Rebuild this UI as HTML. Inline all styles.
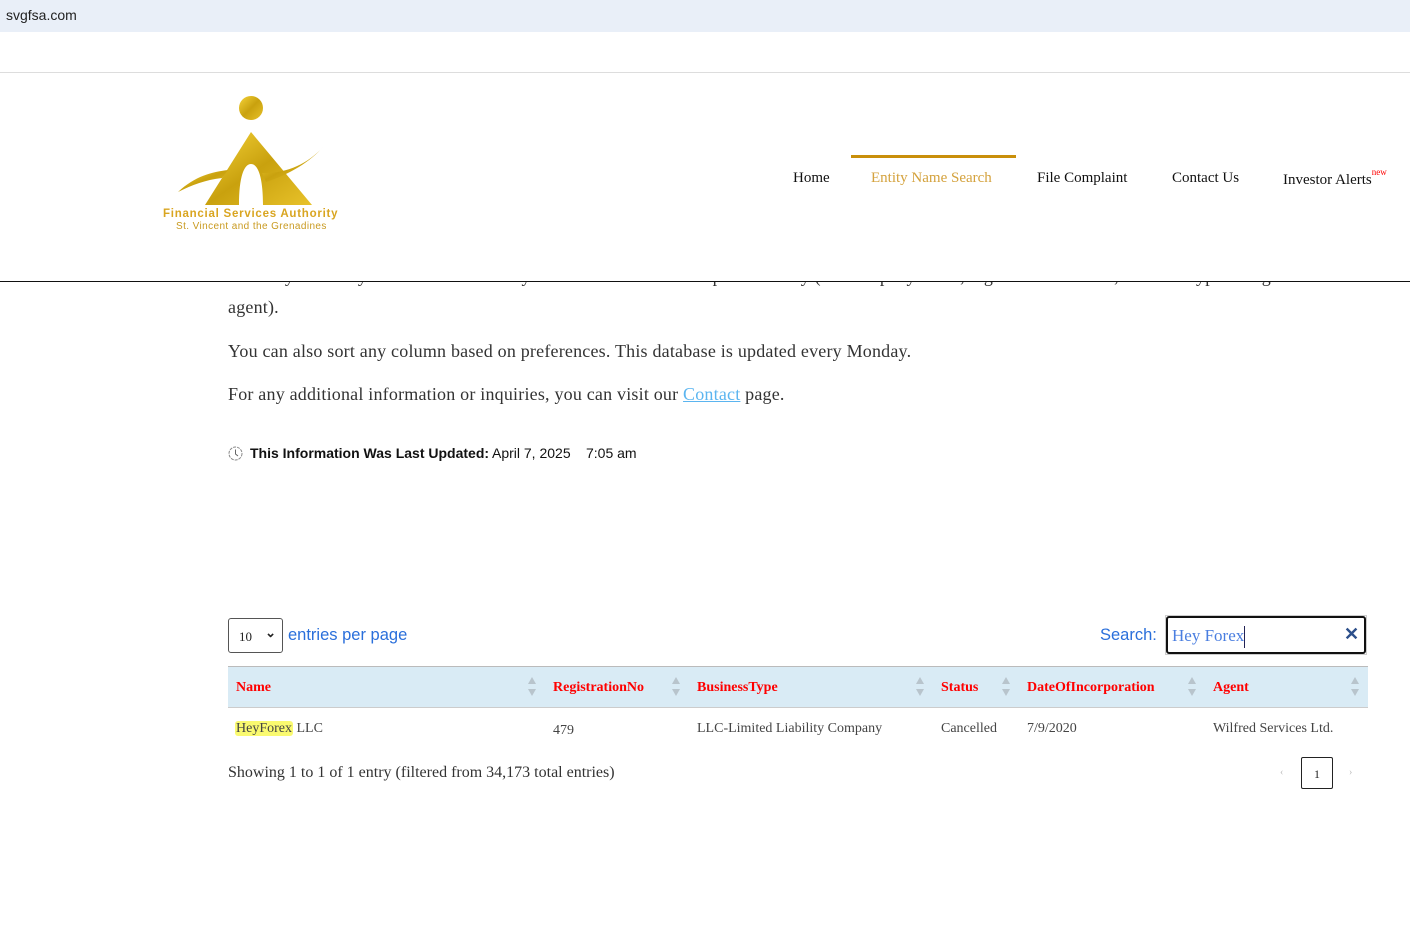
<!DOCTYPE html>
<html><head><meta charset="utf-8"><style>
*{margin:0;padding:0;box-sizing:border-box}
body{width:1410px;height:950px;position:relative;background:#fff;overflow:hidden;font-family:"Liberation Serif",serif;color:#222}
.a{position:absolute;white-space:nowrap}
.top{left:0;top:0;width:1410px;height:32px;background:#e9eff8;font:14px "Liberation Sans",sans-serif;color:#222;padding:7px 6px}
.nav{font-size:15px;color:#111;top:170px}
.p{font-size:18px;color:#333;left:228px;letter-spacing:.2px}
.th{font-size:14px;color:#f00;font-weight:bold;top:680px}
.td{font-size:14px;color:#444;top:721px}
.sort{width:8px;height:20px;top:677px}
.sort:before{content:"";position:absolute;left:0;top:0;border:4px solid transparent;border-bottom:7px solid #b8c4cc;border-top:0}
.sort:after{content:"";position:absolute;left:0;top:12px;border:4px solid transparent;border-top:7px solid #b8c4cc;border-bottom:0}
</style></head><body>
<div class="a top">svgfsa.com</div>
<div class="a" style="left:0;top:72px;width:1410px;height:1px;background:#ddd"></div>
<div class="a p" style="top:266px">You may enter any information from any column to search for a specific entity (i.e. company name, registration number, business type or registered</div>
<div class="a" style="left:0;top:73px;width:1410px;height:208px;background:#fff"></div>
<div class="a" style="left:0;top:281px;width:1410px;height:1px;background:#111"></div>
<svg class="a" style="left:160px;top:92px" width="190" height="120" viewBox="0 0 190 120">
<defs><linearGradient id="g" x1="0" y1="0" x2="1" y2="1"><stop offset="0" stop-color="#f6d43a"/><stop offset=".5" stop-color="#c9a10e"/><stop offset="1" stop-color="#e8c22a"/></linearGradient></defs>
<circle cx="91" cy="16" r="12" fill="url(#g)"/>
<path d="M91 40 L45 113 L79 113 C79 85 84 72 91 72 C98 72 103 85 103 113 L152 113 Z" fill="url(#g)"/>
<path d="M18 100 C35 84 52 80 68 78 L62 86 C45 88 32 93 18 100Z" fill="url(#g)"/>
<path d="M102 81 C125 82 148 72 163 55 C150 70 130 82 106 90Z" fill="url(#g)"/>
</svg>
<div class="a" style="left:163px;top:208px;font:bold 11.5px 'Liberation Sans',sans-serif;color:#d9a520;letter-spacing:.75px">Financial Services Authority</div>
<div class="a" style="left:176px;top:221px;font:10px 'Liberation Sans',sans-serif;color:#c99a20;letter-spacing:.4px">St. Vincent and the Grenadines</div>
<div class="a" style="left:851px;top:155px;width:165px;height:3px;background:#c98f0a"></div>
<div class="a nav" style="left:793px">Home</div>
<div class="a nav" style="left:871px;color:#d4a23d">Entity Name Search</div>
<div class="a nav" style="left:1037px">File Complaint</div>
<div class="a nav" style="left:1172px">Contact Us</div>
<div class="a nav" style="left:1283px">Investor Alerts<sup style="color:#f00;font-size:9px;position:relative;top:-3px">new</sup></div>
<div class="a p" style="top:297px">agent).</div>
<div class="a p" style="top:341px">You can also sort any column based on preferences. This database is updated every Monday.</div>
<div class="a p" style="top:384px">For any additional information or inquiries, you can visit our <span style="color:#5bb5f0;text-decoration:underline">Contact</span> page.</div>
<svg class="a" style="left:228px;top:446px" width="15" height="15" viewBox="0 0 15 15"><circle cx="7.5" cy="7.5" r="6.5" fill="none" stroke="#888" stroke-dasharray="3 1"/><path d="M7.5 3.5V8L10 10" stroke="#666" fill="none"/></svg>
<div class="a" style="left:250px;top:445px;font:bold 14px 'Liberation Sans',sans-serif;color:#111">This Information Was Last Updated:</div>
<div class="a" style="left:492px;top:445px;font:14px 'Liberation Sans',sans-serif;color:#111">April 7, 2025</div>
<div class="a" style="left:586px;top:445px;font:14px 'Liberation Sans',sans-serif;color:#111">7:05 am</div>
<div class="a" style="left:228px;top:618px;width:55px;height:35px;border:1px solid #555;border-radius:3px;font-size:13px;padding:10px 0 0 10px">10<span style="position:absolute;right:6px;top:6px;font:bold 13px 'Liberation Sans';">⌄</span></div>
<div class="a" style="left:288px;top:626px;font:16.5px 'Liberation Sans',sans-serif;color:#2a6fdb">entries per page</div>
<div class="a" style="left:1100px;top:626px;font:16.5px 'Liberation Sans',sans-serif;color:#2a6fdb">Search:</div>
<div class="a" style="left:1165px;top:615px;width:202px;height:40px;border:1px solid #ccc"></div>
<div class="a" style="left:1166px;top:616px;width:200px;height:38px;border:2px solid #111;border-radius:3px;font-size:17px;color:#4a7ee0;padding:8px 4px">Hey Forex<span style="display:inline-block;width:1px;height:22px;background:#225;vertical-align:middle"></span></div>
<div class="a" style="left:1344px;top:624px;font:bold 18px 'Liberation Sans';color:#2c4f8a">✕</div>
<div class="a" style="left:228px;top:666px;width:1140px;height:42px;background:#d9ebf5;border-top:1px solid #bbb;border-bottom:1px solid #ccc"></div>
<div class="a th" style="left:236px">Name</div>
<div class="a th" style="left:553px">RegistrationNo</div>
<div class="a th" style="left:697px">BusinessType</div>
<div class="a th" style="left:941px">Status</div>
<div class="a th" style="left:1027px">DateOfIncorporation</div>
<div class="a th" style="left:1213px">Agent</div>
<div class="a sort" style="left:528px"></div><div class="a sort" style="left:672px"></div><div class="a sort" style="left:916px"></div><div class="a sort" style="left:1002px"></div><div class="a sort" style="left:1188px"></div><div class="a sort" style="left:1351px"></div>
<div class="a td" style="left:235px"><span style="background:#fafa70;border-radius:3px;padding:0 1px">HeyForex</span> LLC</div>
<div class="a td" style="left:553px;top:723px">479</div>
<div class="a td" style="left:697px">LLC-Limited Liability Company</div>
<div class="a td" style="left:941px">Cancelled</div>
<div class="a td" style="left:1027px">7/9/2020</div>
<div class="a td" style="left:1213px">Wilfred Services Ltd.</div>
<div class="a" style="left:228px;top:764px;font-size:16px;color:#333">Showing 1 to 1 of 1 entry (filtered from 34,173 total entries)</div>
<div class="a" style="left:1280px;top:767px;font-size:10px;color:#bbb">‹</div>
<div class="a" style="left:1301px;top:757px;width:32px;height:32px;border:1px solid #222;border-radius:2px;font-size:12px;text-align:center;line-height:32px">1</div>
<div class="a" style="left:1349px;top:767px;font-size:10px;color:#bbb">›</div>
</body></html>
